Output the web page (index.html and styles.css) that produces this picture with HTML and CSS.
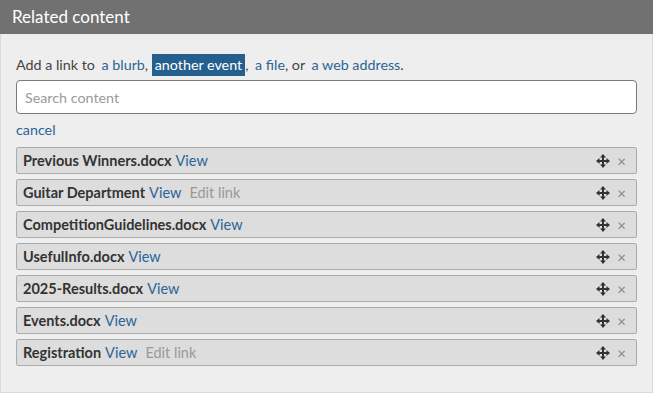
FILE: index.html
```html
<!DOCTYPE html>
<html lang="en">
<head>
  <meta charset="UTF-8" />
  <title>Related content</title>
  <link rel="stylesheet" href="styles.css">
</head>
<body>
  <div class="panel">
    <div class="panel-head">Related content</div>

    <div class="panel-body">
      <p class="intro">Add a link to <a href="#">a blurb</a>, <a href="#" class="picked">another event</a>, <a href="#">a file</a>, or <a href="#">a web address</a>.</p>

      <input class="search" type="text" placeholder="Search content" />

      <a href="#" class="cancel">cancel</a>

      <!-- Linked items -->
      <ul class="items">
        <li class="item">
          <span class="name">Previous Winners.docx</span><a href="#">View</a>
          <span class="tools"><svg class="move" viewBox="0 0 14 14"><path d="M7 0 L10 3.5 H8 V6 H10.5 V4 L14 7 L10.5 10 V8 H8 V10.5 H10 L7 14 L4 10.5 H6 V8 H3.5 V10 L0 7 L3.5 4 V6 H6 V3.5 H4 Z"/></svg><span class="close">×</span></span>
        </li>
        <li class="item">
          <span class="name">Guitar Department</span><a href="#">View</a><span class="edit">Edit link</span>
          <span class="tools"><svg class="move" viewBox="0 0 14 14"><path d="M7 0 L10 3.5 H8 V6 H10.5 V4 L14 7 L10.5 10 V8 H8 V10.5 H10 L7 14 L4 10.5 H6 V8 H3.5 V10 L0 7 L3.5 4 V6 H6 V3.5 H4 Z"/></svg><span class="close">×</span></span>
        </li>
        <li class="item">
          <span class="name">CompetitionGuidelines.docx</span><a href="#">View</a>
          <span class="tools"><svg class="move" viewBox="0 0 14 14"><path d="M7 0 L10 3.5 H8 V6 H10.5 V4 L14 7 L10.5 10 V8 H8 V10.5 H10 L7 14 L4 10.5 H6 V8 H3.5 V10 L0 7 L3.5 4 V6 H6 V3.5 H4 Z"/></svg><span class="close">×</span></span>
        </li>
        <li class="item">
          <span class="name">UsefulInfo.docx</span><a href="#">View</a>
          <span class="tools"><svg class="move" viewBox="0 0 14 14"><path d="M7 0 L10 3.5 H8 V6 H10.5 V4 L14 7 L10.5 10 V8 H8 V10.5 H10 L7 14 L4 10.5 H6 V8 H3.5 V10 L0 7 L3.5 4 V6 H6 V3.5 H4 Z"/></svg><span class="close">×</span></span>
        </li>
        <li class="item">
          <span class="name">2025-Results.docx</span><a href="#">View</a>
          <span class="tools"><svg class="move" viewBox="0 0 14 14"><path d="M7 0 L10 3.5 H8 V6 H10.5 V4 L14 7 L10.5 10 V8 H8 V10.5 H10 L7 14 L4 10.5 H6 V8 H3.5 V10 L0 7 L3.5 4 V6 H6 V3.5 H4 Z"/></svg><span class="close">×</span></span>
        </li>
        <li class="item">
          <span class="name">Events.docx</span><a href="#">View</a>
          <span class="tools"><svg class="move" viewBox="0 0 14 14"><path d="M7 0 L10 3.5 H8 V6 H10.5 V4 L14 7 L10.5 10 V8 H8 V10.5 H10 L7 14 L4 10.5 H6 V8 H3.5 V10 L0 7 L3.5 4 V6 H6 V3.5 H4 Z"/></svg><span class="close">×</span></span>
        </li>
        <li class="item">
          <span class="name">Registration</span><a href="#">View</a><span class="edit">Edit link</span>
          <span class="tools"><svg class="move" viewBox="0 0 14 14"><path d="M7 0 L10 3.5 H8 V6 H10.5 V4 L14 7 L10.5 10 V8 H8 V10.5 H10 L7 14 L4 10.5 H6 V8 H3.5 V10 L0 7 L3.5 4 V6 H6 V3.5 H4 Z"/></svg><span class="close">×</span></span>
        </li>
      </ul>
    </div>
  </div>
</body>
</html>
```

FILE: styles.css
```css
body {
  margin: 0;
  font-family: Lato, "Open Sans", sans-serif;
  font-size: 14px;
  color: #444;
  background: #fff;
}

a {
  color: #2a6496;
  text-decoration: none;
}

.panel {
  width: 653px;
  height: 393px;
  box-sizing: border-box;
  background: #eeeeee;
  border: 1px solid #dadada;
  border-top: none;
}

.panel-head {
  height: 34px;
  line-height: 33px;
  margin: 0 -1px;
  padding: 0 12px;
  background: #717171;
  color: #fff;
  font-size: 17px;
}

.panel-body {
  padding: 20px 15px 0 15px;
}

.intro {
  margin: 0 0 4px 0;
  line-height: 22px;
  font-size: 14.3px;
}

.intro a {
  padding-left: 3px;
}

.intro a.picked {
  background: #255f8e;
  color: #fff;
  padding: 2px 3px 3px 3px;
}

.search {
  display: block;
  width: 621px;
  height: 34px;
  box-sizing: border-box;
  padding: 0 8px;
  border: 1px solid #7a7a7a;
  border-radius: 4px;
  font-family: inherit;
  font-size: 14.3px;
  color: #333;
  background: #fff;
}

.search::placeholder {
  color: #9a9a9a;
}

.cancel {
  display: block;
  margin-top: 6px;
  line-height: 20px;
  font-size: 14.3px;
}

.items {
  list-style: none;
  margin: 7px 0 0 0;
  padding: 0;
}

.item {
  display: flex;
  align-items: center;
  gap: 4px;
  width: 621px;
  height: 27px;
  box-sizing: border-box;
  margin-bottom: 5px;
  padding: 0 10px 0 6px;
  background: #dddddd;
  border: 1px solid #ababab;
  border-radius: 2px;
  font-size: 14.5px;
}

.name {
  font-weight: bold;
  color: #333;
}

.edit {
  margin-left: 4px;
  color: #999;
}

.tools {
  margin-left: auto;
  display: flex;
  align-items: center;
  gap: 7px;
}

.move {
  width: 14px;
  height: 14px;
  fill: #333;
}

.close {
  color: #888;
  font-size: 15px;
}
```
